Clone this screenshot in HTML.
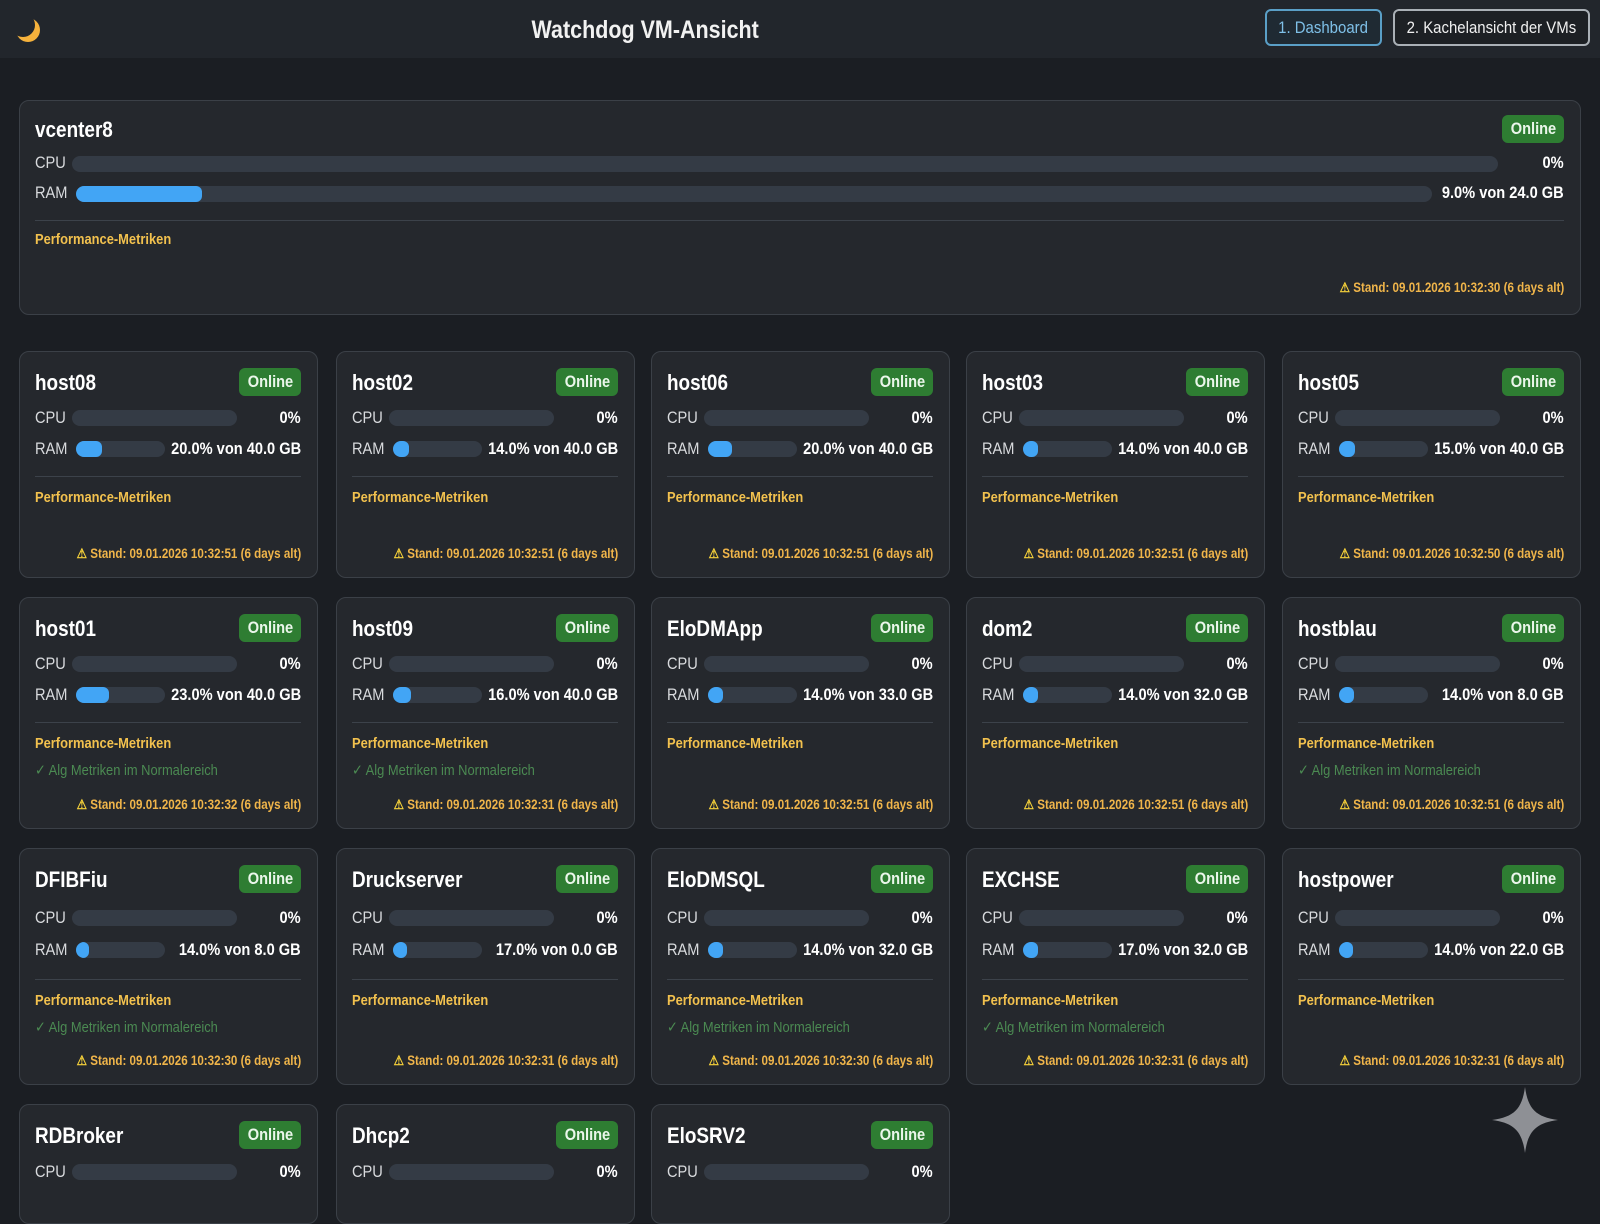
<!DOCTYPE html>
<html><head><meta charset="utf-8">
<style>
*{box-sizing:border-box;margin:0;padding:0}
body{width:1600px;height:1195px;overflow:hidden;background:#1b1e23;font-family:"Liberation Sans",sans-serif;color:#e8eaed;position:relative}
.hdr{position:absolute;left:0;top:0;width:1600px;height:58px;background:#22262c}
.title{position:absolute;left:0;width:1290px;top:16px;text-align:center;font-size:25px;font-weight:bold;color:#f2f2f2}
.title span{display:inline-block;transform:scaleX(0.86)}
.btn{position:absolute;top:9px;height:37px;border-radius:6px;font-size:17px;line-height:33px;text-align:center;white-space:nowrap}
.btn span{display:inline-block;transform:scaleX(0.88)}
.b1{left:1265px;width:117px;border:2px solid #5a9fc7;color:#7fc0e8;background:#1f2a33}
.b2{left:1393px;width:197px;border:2px solid #aab0b6;color:#f0f0f0;background:#1d2024}
.card{position:absolute;width:299px;background:#25282d;border:1.5px solid #3b4047;border-radius:10px;overflow:hidden}
.n,.lbl,.perf,.ok{transform:scaleX(0.86);transform-origin:left center;white-space:nowrap}
.val,.st{transform:scaleX(0.86);transform-origin:right center;white-space:nowrap}
.card .n{position:absolute;left:15px;top:18px;font-size:22px;font-weight:bold;color:#fff}
.badge{position:absolute;right:16px;top:16px;width:62px;height:28px;border-radius:6px;background:#2e7d32;color:#eaf6ea;font-weight:bold;font-size:17px;line-height:28px;text-align:center}
.badge span{display:inline-block;transform:scaleX(0.86)}
.lbl{position:absolute;left:15px;font-size:17px;color:#d8dadd}
.val{position:absolute;right:16px;font-size:17px;font-weight:bold;color:#fff}
.bar{position:absolute;height:16px;border-radius:8px;background:#343b45;overflow:hidden}
.fill{height:100%;background:#42a5f5;border-radius:6px}
.div{position:absolute;left:15px;right:16px;top:124px;height:1px;background:#3c424a}
.perf{position:absolute;left:15px;top:137px;font-size:15px;font-weight:bold;color:#f2c14e}
.ok{position:absolute;left:15px;top:163px;font-size:15px;color:#4b8a52}
.st{position:absolute;right:16px;bottom:15px;font-size:13.5px;font-weight:bold;color:#f0b54a}
.st b{color:#f7d23a}
</style></head><body>
<div class="hdr">
<svg style="position:absolute;left:12px;top:13px" width="32" height="32" viewBox="0 0 32 32"><defs><mask id="mm"><rect width="32" height="32" fill="#fff"/><circle cx="11" cy="12" r="12" fill="#000"/></mask></defs><circle cx="16" cy="17" r="12" fill="#f6b23c" mask="url(#mm)"/></svg>
<div class="title"><span>Watchdog VM-Ansicht</span></div>
<div class="btn b1"><span>1. Dashboard</span></div>
<div class="btn b2"><span>2. Kachelansicht der VMs</span></div>
</div>

<div class="card" style="left:19px;top:100px;width:1562px;height:215px">
<div class="n" style="top:16px">vcenter8</div>
<div class="badge" style="top:14px"><span>Online</span></div>
<div class="lbl" style="top:52px">CPU</div><div class="bar" style="left:52px;width:1426px;top:55px"></div><div class="val" style="top:52px">0%</div>
<div class="lbl" style="top:82px">RAM</div><div class="bar" style="left:56px;width:1356px;top:85px"><div class="fill" style="width:126px"></div></div><div class="val" style="top:82px">9.0% von 24.0 GB</div>
<div class="div" style="top:119px"></div>
<div class="perf" style="top:130px">Performance-Metriken</div>
<div class="st" style="bottom:18px"><b>⚠</b> Stand: 09.01.2026 10:32:30 (6 days alt)</div>
</div>

<!-- ROW 1 -->
<div class="card" style="left:19px;top:351px;height:227px"><div class="n">host08</div><div class="badge"><span>Online</span></div><div class="lbl" style="top:56px">CPU</div><div class="bar" style="left:52px;width:165px;top:58px"></div><div class="val" style="top:56px">0%</div><div class="lbl" style="top:87px">RAM</div><div class="bar" style="left:56px;width:89px;top:89px"><div class="fill" style="width:26px"></div></div><div class="val" style="top:87px">20.0% von 40.0 GB</div><div class="div"></div><div class="perf">Performance-Metriken</div><div class="st"><b>⚠</b> Stand: 09.01.2026 10:32:51 (6 days alt)</div></div>
<div class="card" style="left:336px;top:351px;height:227px"><div class="n">host02</div><div class="badge"><span>Online</span></div><div class="lbl" style="top:56px">CPU</div><div class="bar" style="left:52px;width:165px;top:58px"></div><div class="val" style="top:56px">0%</div><div class="lbl" style="top:87px">RAM</div><div class="bar" style="left:56px;width:89px;top:89px"><div class="fill" style="width:16px"></div></div><div class="val" style="top:87px">14.0% von 40.0 GB</div><div class="div"></div><div class="perf">Performance-Metriken</div><div class="st"><b>⚠</b> Stand: 09.01.2026 10:32:51 (6 days alt)</div></div>
<div class="card" style="left:651px;top:351px;height:227px"><div class="n">host06</div><div class="badge"><span>Online</span></div><div class="lbl" style="top:56px">CPU</div><div class="bar" style="left:52px;width:165px;top:58px"></div><div class="val" style="top:56px">0%</div><div class="lbl" style="top:87px">RAM</div><div class="bar" style="left:56px;width:89px;top:89px"><div class="fill" style="width:24px"></div></div><div class="val" style="top:87px">20.0% von 40.0 GB</div><div class="div"></div><div class="perf">Performance-Metriken</div><div class="st"><b>⚠</b> Stand: 09.01.2026 10:32:51 (6 days alt)</div></div>
<div class="card" style="left:966px;top:351px;height:227px"><div class="n">host03</div><div class="badge"><span>Online</span></div><div class="lbl" style="top:56px">CPU</div><div class="bar" style="left:52px;width:165px;top:58px"></div><div class="val" style="top:56px">0%</div><div class="lbl" style="top:87px">RAM</div><div class="bar" style="left:56px;width:89px;top:89px"><div class="fill" style="width:15px"></div></div><div class="val" style="top:87px">14.0% von 40.0 GB</div><div class="div"></div><div class="perf">Performance-Metriken</div><div class="st"><b>⚠</b> Stand: 09.01.2026 10:32:51 (6 days alt)</div></div>
<div class="card" style="left:1282px;top:351px;height:227px"><div class="n">host05</div><div class="badge"><span>Online</span></div><div class="lbl" style="top:56px">CPU</div><div class="bar" style="left:52px;width:165px;top:58px"></div><div class="val" style="top:56px">0%</div><div class="lbl" style="top:87px">RAM</div><div class="bar" style="left:56px;width:89px;top:89px"><div class="fill" style="width:16px"></div></div><div class="val" style="top:87px">15.0% von 40.0 GB</div><div class="div"></div><div class="perf">Performance-Metriken</div><div class="st"><b>⚠</b> Stand: 09.01.2026 10:32:50 (6 days alt)</div></div>

<!-- ROW 2 -->
<div class="card" style="left:19px;top:597px;height:232px"><div class="n">host01</div><div class="badge"><span>Online</span></div><div class="lbl" style="top:56px">CPU</div><div class="bar" style="left:52px;width:165px;top:58px"></div><div class="val" style="top:56px">0%</div><div class="lbl" style="top:87px">RAM</div><div class="bar" style="left:56px;width:89px;top:89px"><div class="fill" style="width:33px"></div></div><div class="val" style="top:87px">23.0% von 40.0 GB</div><div class="div"></div><div class="perf">Performance-Metriken</div><div class="ok">✓ Alg Metriken im Normalereich</div><div class="st"><b>⚠</b> Stand: 09.01.2026 10:32:32 (6 days alt)</div></div>
<div class="card" style="left:336px;top:597px;height:232px"><div class="n">host09</div><div class="badge"><span>Online</span></div><div class="lbl" style="top:56px">CPU</div><div class="bar" style="left:52px;width:165px;top:58px"></div><div class="val" style="top:56px">0%</div><div class="lbl" style="top:87px">RAM</div><div class="bar" style="left:56px;width:89px;top:89px"><div class="fill" style="width:18px"></div></div><div class="val" style="top:87px">16.0% von 40.0 GB</div><div class="div"></div><div class="perf">Performance-Metriken</div><div class="ok">✓ Alg Metriken im Normalereich</div><div class="st"><b>⚠</b> Stand: 09.01.2026 10:32:31 (6 days alt)</div></div>
<div class="card" style="left:651px;top:597px;height:232px"><div class="n">EloDMApp</div><div class="badge"><span>Online</span></div><div class="lbl" style="top:56px">CPU</div><div class="bar" style="left:52px;width:165px;top:58px"></div><div class="val" style="top:56px">0%</div><div class="lbl" style="top:87px">RAM</div><div class="bar" style="left:56px;width:89px;top:89px"><div class="fill" style="width:15px"></div></div><div class="val" style="top:87px">14.0% von 33.0 GB</div><div class="div"></div><div class="perf">Performance-Metriken</div><div class="st"><b>⚠</b> Stand: 09.01.2026 10:32:51 (6 days alt)</div></div>
<div class="card" style="left:966px;top:597px;height:232px"><div class="n">dom2</div><div class="badge"><span>Online</span></div><div class="lbl" style="top:56px">CPU</div><div class="bar" style="left:52px;width:165px;top:58px"></div><div class="val" style="top:56px">0%</div><div class="lbl" style="top:87px">RAM</div><div class="bar" style="left:56px;width:89px;top:89px"><div class="fill" style="width:15px"></div></div><div class="val" style="top:87px">14.0% von 32.0 GB</div><div class="div"></div><div class="perf">Performance-Metriken</div><div class="st"><b>⚠</b> Stand: 09.01.2026 10:32:51 (6 days alt)</div></div>
<div class="card" style="left:1282px;top:597px;height:232px"><div class="n">hostblau</div><div class="badge"><span>Online</span></div><div class="lbl" style="top:56px">CPU</div><div class="bar" style="left:52px;width:165px;top:58px"></div><div class="val" style="top:56px">0%</div><div class="lbl" style="top:87px">RAM</div><div class="bar" style="left:56px;width:89px;top:89px"><div class="fill" style="width:15px"></div></div><div class="val" style="top:87px">14.0% von 8.0 GB</div><div class="div"></div><div class="perf">Performance-Metriken</div><div class="ok">✓ Alg Metriken im Normalereich</div><div class="st"><b>⚠</b> Stand: 09.01.2026 10:32:51 (6 days alt)</div></div>

<!-- ROW 3 -->
<div class="card" style="left:19px;top:848px;height:237px"><div class="n">DFIBFiu</div><div class="badge"><span>Online</span></div><div class="lbl" style="top:59px">CPU</div><div class="bar" style="left:52px;width:165px;top:61px"></div><div class="val" style="top:59px">0%</div><div class="lbl" style="top:91px">RAM</div><div class="bar" style="left:56px;width:89px;top:93px"><div class="fill" style="width:13px"></div></div><div class="val" style="top:91px">14.0% von 8.0 GB</div><div class="div" style="top:130px"></div><div class="perf" style="top:143px">Performance-Metriken</div><div class="ok" style="top:169px">✓ Alg Metriken im Normalereich</div><div class="st"><b>⚠</b> Stand: 09.01.2026 10:32:30 (6 days alt)</div></div>
<div class="card" style="left:336px;top:848px;height:237px"><div class="n">Druckserver</div><div class="badge"><span>Online</span></div><div class="lbl" style="top:59px">CPU</div><div class="bar" style="left:52px;width:165px;top:61px"></div><div class="val" style="top:59px">0%</div><div class="lbl" style="top:91px">RAM</div><div class="bar" style="left:56px;width:89px;top:93px"><div class="fill" style="width:14px"></div></div><div class="val" style="top:91px">17.0% von 0.0 GB</div><div class="div" style="top:130px"></div><div class="perf" style="top:143px">Performance-Metriken</div><div class="st"><b>⚠</b> Stand: 09.01.2026 10:32:31 (6 days alt)</div></div>
<div class="card" style="left:651px;top:848px;height:237px"><div class="n">EloDMSQL</div><div class="badge"><span>Online</span></div><div class="lbl" style="top:59px">CPU</div><div class="bar" style="left:52px;width:165px;top:61px"></div><div class="val" style="top:59px">0%</div><div class="lbl" style="top:91px">RAM</div><div class="bar" style="left:56px;width:89px;top:93px"><div class="fill" style="width:15px"></div></div><div class="val" style="top:91px">14.0% von 32.0 GB</div><div class="div" style="top:130px"></div><div class="perf" style="top:143px">Performance-Metriken</div><div class="ok" style="top:169px">✓ Alg Metriken im Normalereich</div><div class="st"><b>⚠</b> Stand: 09.01.2026 10:32:30 (6 days alt)</div></div>
<div class="card" style="left:966px;top:848px;height:237px"><div class="n">EXCHSE</div><div class="badge"><span>Online</span></div><div class="lbl" style="top:59px">CPU</div><div class="bar" style="left:52px;width:165px;top:61px"></div><div class="val" style="top:59px">0%</div><div class="lbl" style="top:91px">RAM</div><div class="bar" style="left:56px;width:89px;top:93px"><div class="fill" style="width:15px"></div></div><div class="val" style="top:91px">17.0% von 32.0 GB</div><div class="div" style="top:130px"></div><div class="perf" style="top:143px">Performance-Metriken</div><div class="ok" style="top:169px">✓ Alg Metriken im Normalereich</div><div class="st"><b>⚠</b> Stand: 09.01.2026 10:32:31 (6 days alt)</div></div>
<div class="card" style="left:1282px;top:848px;height:237px"><div class="n">hostpower</div><div class="badge"><span>Online</span></div><div class="lbl" style="top:59px">CPU</div><div class="bar" style="left:52px;width:165px;top:61px"></div><div class="val" style="top:59px">0%</div><div class="lbl" style="top:91px">RAM</div><div class="bar" style="left:56px;width:89px;top:93px"><div class="fill" style="width:14px"></div></div><div class="val" style="top:91px">14.0% von 22.0 GB</div><div class="div" style="top:130px"></div><div class="perf" style="top:143px">Performance-Metriken</div><div class="st"><b>⚠</b> Stand: 09.01.2026 10:32:31 (6 days alt)</div></div>

<!-- ROW 4 -->
<div class="card" style="left:19px;top:1104px;height:120px"><div class="n">RDBroker</div><div class="badge"><span>Online</span></div><div class="lbl" style="top:57px">CPU</div><div class="bar" style="left:52px;width:165px;top:59px"></div><div class="val" style="top:57px">0%</div></div>
<div class="card" style="left:336px;top:1104px;height:120px"><div class="n">Dhcp2</div><div class="badge"><span>Online</span></div><div class="lbl" style="top:57px">CPU</div><div class="bar" style="left:52px;width:165px;top:59px"></div><div class="val" style="top:57px">0%</div></div>
<div class="card" style="left:651px;top:1104px;height:120px"><div class="n">EloSRV2</div><div class="badge"><span>Online</span></div><div class="lbl" style="top:57px">CPU</div><div class="bar" style="left:52px;width:165px;top:59px"></div><div class="val" style="top:57px">0%</div></div>

<svg style="position:absolute;left:1492px;top:1087px" width="66" height="66" viewBox="0 0 66 66"><path d="M33 0 C36 22 44 30 66 33 C44 36 36 44 33 66 C30 44 22 36 0 33 C22 30 30 22 33 0 Z" fill="#8e9095"/></svg>
</body></html>
